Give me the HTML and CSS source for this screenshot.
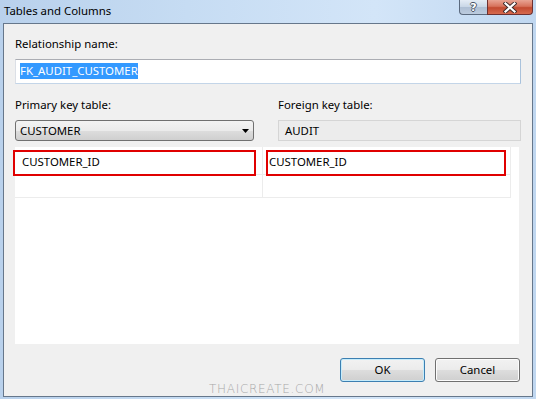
FILE: index.html
```html
<!DOCTYPE html>
<html>
<head>
<meta charset="utf-8">
<link rel="stylesheet" href="styles.css">
</head>
<body>
<div class="window">
  <div class="titlebar">
    <span class="title">Tables and Columns</span>
    <div class="caption-btns">
      <div class="cbtn help"><span class="qmark">?</span></div>
      <div class="cbtn close">
        <svg width="14" height="11" viewBox="0 0 14 11">
          <path d="M2.5 1.5 L11.5 9.5 M11.5 1.5 L2.5 9.5" stroke="#3a2a2a" stroke-width="4" stroke-linecap="square"/>
          <path d="M2.5 1.5 L11.5 9.5 M11.5 1.5 L2.5 9.5" stroke="#ffffff" stroke-width="2.2" stroke-linecap="square"/>
        </svg>
      </div>
    </div>
  </div>
  <div class="client">
    <div class="lbl">Relationship name:</div>
    <div class="textbox"><span class="sel">FK_AUDIT_CUSTOMER</span></div>
    <div class="tables">
      <div class="col">
        <div class="lbl">Primary key table:</div>
        <div class="combo">
          <span>CUSTOMER</span>
          <svg class="arrow" width="7" height="4" viewBox="0 0 7 4"><path d="M0 0 H7 L3.5 4 Z" fill="#000"/></svg>
        </div>
      </div>
      <div class="col">
        <div class="lbl">Foreign key table:</div>
        <div class="readonly">AUDIT</div>
      </div>
    </div>
    <div class="grid">
      <div class="row first">
        <div class="cell c1"><span class="mark m1"></span>CUSTOMER_ID</div>
        <div class="cell c2"><span class="mark m2"></span>CUSTOMER_ID</div>
        <div class="filler"></div>
      </div>
      <div class="row second">
        <div class="cell c1"></div>
        <div class="cell c2"></div>
        <div class="filler"></div>
      </div>
    </div>
    <div class="buttons">
      <div class="btn default">OK</div>
      <div class="btn">Cancel</div>
    </div>
  </div>
  <div class="watermark">THAICREATE.COM</div>
</div>
</body>
</html>
```

FILE: styles.css
```css
* { box-sizing: border-box; }
html, body { margin: 0; padding: 0; }
body {
  width: 536px;
  height: 399px;
  overflow: hidden;
  font-family: "Noto Sans", "Open Sans", sans-serif;
  font-size: 11.4px;
  color: #000;
}
.window {
  position: relative;
  width: 536px;
  height: 399px;
  background: linear-gradient(90deg, #b9d1ec 0%, #c6dcf3 35%, #d3e5f8 70%, #c0d7f0 100%);
}
.titlebar {
  height: 23px;
  display: flex;
  justify-content: space-between;
  align-items: flex-start;
  padding: 0 3px 0 4px;
}
.title {
  line-height: 21px;
}
.caption-btns {
  display: flex;
  height: 15px;
}
.cbtn {
  height: 15px;
  display: flex;
  align-items: center;
  justify-content: center;
  border: 1px solid #5b6a7e;
  border-top: none;
}
.help {
  width: 28px;
  border-radius: 0 0 0 4px;
  border-right: none;
  background: linear-gradient(180deg, #e4ecf5 0%, #c8d6e6 50%, #aebfd4 51%, #bccbde 100%);
}
.qmark {
  color: #fff;
  font-family: "DejaVu Sans", sans-serif;
  font-weight: bold;
  font-size: 11px;
  line-height: 13px;
  text-shadow: -1px 0 #4a5566, 1px 0 #4a5566, 0 -1px #4a5566, 0 1px #4a5566;
}
.close {
  width: 46px;
  border-radius: 0 0 4px 0;
  border-color: #6e3030;
  background: linear-gradient(180deg, #e8a493 0%, #d7735c 45%, #c24a30 55%, #d66a4e 100%);
}
.client {
  height: 374px;
  margin: 0 3px;
  border: 1px solid #66778b;
  background: #f0f0f0;
  padding: 12px 11px 0 11px;
}
.lbl {
  height: 16px;
  line-height: 16px;
}
.textbox {
  margin-top: 7px;
  height: 25px;
  background: #fff;
  border: 1px solid;
  border-color: #abadb3 #a9c2dc #c3d5e8 #dbdfe6;
  padding: 3px 4px 0 4px;
}
.sel {
  display: inline-block;
  background: #3399ff;
  color: #fff;
  line-height: 16px;
  height: 16px;
}
.tables {
  margin-top: 13px;
  display: grid;
  grid-template-columns: 239px 1fr;
  column-gap: 24px;
}
.combo {
  margin-top: 7px;
  height: 21px;
  border: 1px solid #707070;
  border-radius: 3px;
  background: linear-gradient(180deg, #f3f3f3 0%, #ebebeb 50%, #dddddd 51%, #cfcfcf 100%);
  display: flex;
  align-items: center;
  justify-content: space-between;
  padding: 0 4px 0 4px;
  line-height: 19px;
}
.readonly {
  margin-top: 7px;
  height: 21px;
  border: 1px solid #d5d5d5;
  background: #ececec;
  padding: 0 6px;
  line-height: 19px;
}
.grid {
  margin-top: 6px;
  width: 504px;
  height: 197px;
  background: #fff;
}
.row {
  display: grid;
  grid-template-columns: 248px 248px 1fr;
}
.row.first { height: 28px; }
.row.second { height: 23px; }
.cell {
  position: relative;
  border-right: 1px solid #ececec;
  border-bottom: 1px solid #ececec;
  line-height: 20px;
}
.row.first .cell { padding-top: 5px; }
.c1 { padding-left: 7px; }
.c2 { padding-left: 6px; }
.mark {
  position: absolute;
  top: 3px;
  height: 26px;
  border: 2px solid #e00000;
}
.m1 { left: -2px; width: 243px; }
.m2 { left: 3px; width: 240px; }
.buttons {
  margin-top: 14px;
  display: flex;
  justify-content: flex-end;
  gap: 10px;
  padding-right: 1px;
}
.btn {
  width: 85px;
  height: 24px;
  border: 1px solid #707070;
  border-radius: 3px;
  background: linear-gradient(180deg, #f2f2f2 0%, #ebebeb 50%, #dddddd 51%, #cfcfcf 100%);
  box-shadow: inset 0 0 0 1px #fcfcfc;
  text-align: center;
  line-height: 22px;
}
.btn.default {
  border-color: #3c7fb1;
  box-shadow: inset 0 0 0 1px #c6ecfb;
}
.watermark {
  position: absolute;
  left: 209px;
  top: 382px;
  font-family: "DejaVu Sans", sans-serif;
  font-size: 12px;
  font-weight: 200;
  color: #a8a8a8;
  letter-spacing: 0.7px;
  line-height: 14px;
}
```
